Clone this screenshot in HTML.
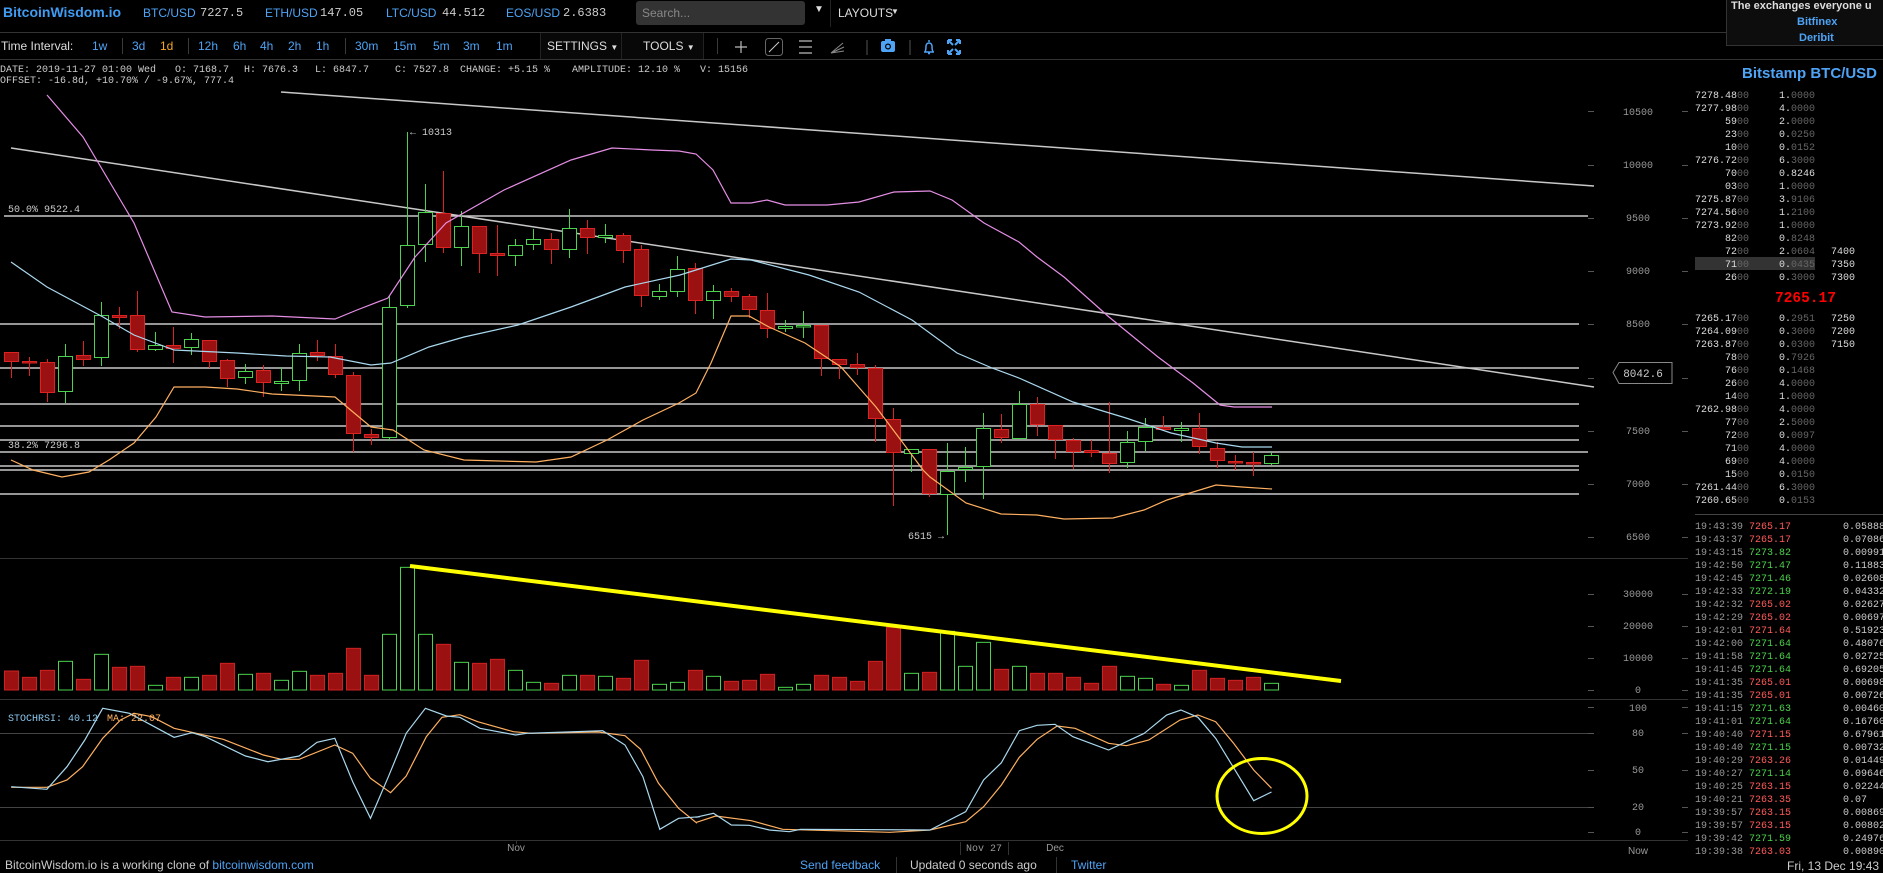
<!DOCTYPE html>
<html><head><meta charset="utf-8">
<style>
*{margin:0;padding:0;box-sizing:border-box}
html,body{width:1883px;height:873px;background:#000;overflow:hidden;font-family:"Liberation Sans",Arial,sans-serif;color:#ddd}
.a{position:absolute;white-space:nowrap}
.m{font-family:"Liberation Mono",monospace}
.b{color:#4ea3f5}
.t12{font-size:12px}
.ob{position:absolute;left:1695px;font-family:"Liberation Mono",monospace;font-size:10px;line-height:13px;color:#ddd}
.ob div{height:13px;white-space:nowrap;position:relative}
.ob .p{display:inline-block;width:54px;text-align:right}
.ob .q{display:inline-block;width:36px;position:absolute;left:84px}
.ob .s{position:absolute;left:136px}
.d{color:#666}
.tr{position:absolute;left:1695px;top:521px;width:188px;overflow:hidden;font-family:"Liberation Mono",monospace;font-size:10px;line-height:13px;color:#999}
.tr div{height:13px;white-space:nowrap;position:relative}
.tr .r{color:#ff5a5a;position:absolute;left:54px}
.tr .g{color:#4cd24c;position:absolute;left:54px}
.tr .v{position:absolute;left:148px;color:#ccc}
.sep{position:absolute;width:1px;background:#3a3a3a}
</style></head><body>

<div class="a" style="left:0;top:32px;width:1726px;height:1px;background:#333"></div>
<div class="a" style="left:0;top:59px;width:1883px;height:1px;background:#333"></div>
<div class="a b" style="left:3px;top:4px;font-size:14px;font-weight:bold;color:#3f9cf2">BitcoinWisdom.io</div>
<div class="a b t12" style="left:143px;top:6px">BTC/USD</div><div class="a m t12" style="left:200px;top:6px;color:#ccc">7227.5</div>
<div class="a b t12" style="left:265px;top:6px">ETH/USD</div><div class="a m t12" style="left:320px;top:6px;color:#ccc">147.05</div>
<div class="a b t12" style="left:386px;top:6px">LTC/USD</div><div class="a m t12" style="left:442px;top:6px;color:#ccc">44.512</div>
<div class="a b t12" style="left:506px;top:6px">EOS/USD</div><div class="a m t12" style="left:563px;top:6px;color:#ccc">2.6383</div>
<div class="a" style="left:636px;top:1px;width:169px;height:24px;background:#333;border-radius:3px"></div>
<div class="a t12" style="left:642px;top:6px;color:#888">Search...</div>
<div class="a" style="left:814px;top:4px;font-size:10px;color:#ddd">▼</div>
<div class="a" style="left:830px;top:0;width:1px;height:27px;background:#222"></div>
<div class="a t12" style="left:838px;top:6px;color:#ddd">LAYOUTS</div>
<div class="a" style="left:891px;top:7px;font-size:8px;color:#ddd">▼</div>
<div class="a" style="left:1726px;top:0;width:157px;height:46px;background:#0d0d0d;border-left:1px solid #333;border-bottom:1px solid #333"></div>
<div class="a" style="left:1731px;top:0;font-size:11px;font-weight:bold;color:#ddd">The exchanges everyone u</div>
<div class="a" style="left:1797px;top:16px;font-size:11px;font-weight:bold;color:#4ea3f5">Bitfinex</div>
<div class="a" style="left:1799px;top:32px;font-size:11px;font-weight:bold;color:#4ea3f5">Deribit</div>

<div class="a t12" style="left:1px;top:39px;color:#ddd">Time Interval:</div>
<div class="a t12 b" style="left:92px;top:39px">1w</div>
<div class="sep" style="left:122px;top:38px;height:16px"></div>
<div class="a t12 b" style="left:132px;top:39px">3d</div>
<div class="a t12" style="left:160px;top:39px;color:#f5a623">1d</div>
<div class="sep" style="left:188px;top:38px;height:16px"></div>
<div class="a t12 b" style="left:198px;top:39px">12h</div>
<div class="a t12 b" style="left:233px;top:39px">6h</div>
<div class="a t12 b" style="left:260px;top:39px">4h</div>
<div class="a t12 b" style="left:288px;top:39px">2h</div>
<div class="a t12 b" style="left:316px;top:39px">1h</div>
<div class="sep" style="left:345px;top:38px;height:16px"></div>
<div class="a t12 b" style="left:355px;top:39px">30m</div>
<div class="a t12 b" style="left:393px;top:39px">15m</div>
<div class="a t12 b" style="left:433px;top:39px">5m</div>
<div class="a t12 b" style="left:463px;top:39px">3m</div>
<div class="a t12 b" style="left:496px;top:39px">1m</div>
<div class="a" style="left:540px;top:33px;width:82px;height:26px;background:#080808;border-left:1px solid #222;border-right:1px solid #222"></div>
<div class="a t12" style="left:547px;top:39px;color:#ddd">SETTINGS <span style="font-size:8px">▼</span></div>
<div class="a" style="left:622px;top:33px;width:82px;height:26px;background:#080808;border-right:1px solid #222"></div>
<div class="a t12" style="left:643px;top:39px;color:#ddd">TOOLS <span style="font-size:8px">▼</span></div>
<div class="sep" style="left:717px;top:38px;height:16px"></div>
<svg class="a" style="left:700px;top:28px" width="300" height="34" viewBox="0 0 300 34">
 <path d="M41 13v12M35 19h12" stroke="#bbb" stroke-width="1.2" fill="none"/>
 <rect x="65.5" y="10.5" width="17" height="17" rx="3" fill="none" stroke="#666"/>
 <path d="M69 24L79 14" stroke="#ccc" stroke-width="1"/>
 <path d="M99 13h13M99 19h13M99 25h13" stroke="#bbb" stroke-width="1.2"/>
 <path d="M131 25l12-10M131 25l13-6M131 25l13-2" stroke="#888" stroke-width="1"/>
 <path d="M167 12v15" stroke="#555"/>
 <rect x="181" y="13" width="14" height="11" rx="2" fill="#4ea3f5"/><rect x="185" y="11" width="6" height="3" fill="#4ea3f5"/><circle cx="188" cy="18.5" r="3" fill="#000"/><circle cx="188" cy="18.5" r="1.8" fill="#4ea3f5"/>
 <path d="M210 12v15" stroke="#555"/>
 <path d="M224 24h10M225 24c1-2 1-4 1-6a3 3 0 0 1 6 0c0 2 0 4 1 6M229 12v2M228 25.5h2" stroke="#4ea3f5" stroke-width="1.5" fill="none"/>
 <path d="M249 13l4 4M259 13l-4 4M249 25l4-4M259 25l-4-4M248 12h4M248 12v4M260 12h-4M260 12v4M248 26h4M248 26v-4M260 26h-4M260 26v-4" stroke="#4ea3f5" stroke-width="2" fill="none"/>
</svg>

<div class="a m" style="left:0;top:65px;font-size:10px;color:#ccc">DATE: 2019-11-27 01:00 Wed</div>
<div class="a m" style="left:175px;top:65px;font-size:10px;color:#ccc">O: 7168.7</div>
<div class="a m" style="left:244px;top:65px;font-size:10px;color:#ccc">H: 7676.3</div>
<div class="a m" style="left:315px;top:65px;font-size:10px;color:#ccc">L: 6847.7</div>
<div class="a m" style="left:395px;top:65px;font-size:10px;color:#ccc">C: 7527.8</div>
<div class="a m" style="left:460px;top:65px;font-size:10px;color:#ccc">CHANGE: +5.15 %</div>
<div class="a m" style="left:572px;top:65px;font-size:10px;color:#ccc">AMPLITUDE: 12.10 %</div>
<div class="a m" style="left:700px;top:65px;font-size:10px;color:#ccc">V: 15156</div>
<div class="a m" style="left:0;top:76px;font-size:10px;color:#ccc">OFFSET: -16.8d, +10.70% / -9.67%, 777.4</div>

<svg id="ch" class="a" style="left:0;top:0" width="1688" height="873" viewBox="0 0 1688 873">
 <g stroke="#333" stroke-width="1">
  <path d="M0 558.5H1688M0 699.5H1688M0 840.5H1688M1688.5 59V855"/>
 </g>
 <path d="M0 733.5H1594M0 807.5H1594" stroke="#444"/>
 <g stroke="#c8c8c8" stroke-width="1.5" fill="none">
  <path d="M4 216H1588M0 324H1579M0 368H1579M0 404H1579M0 426H1579M0 440H1579M0 452H1588M0 466H1579M0 470H1579M0 494H1579"/>
  <path d="M281 92L1594 186"/>
  <path d="M11 148L1594 387"/>
 </g>
 <g id="cand"></g>
 <g fill="none" stroke-width="1.2">
  <polyline stroke="#e58ee5" points="47,95 83,137 134,223 172,312 205,317 272,316 335,319 357,310 388,298 415,257 446,223 504,190 571,160 612,148 652,150 679,151 696,154 713,170 731,203 751,203 767,200 785,205 827,205 859,202 894,192 930,191 952,200 984,223 1019,242 1037,257 1064,277 1109,317 1158,357 1193,383 1220,405 1234,407 1272,407"/>
  <polyline stroke="#aad8ee" points="11,262 47,287 103,317 134,335 174,350 237,353 286,356 330,357 371,365 391,363 429,347 464,337 518,325 571,307 625,287 680,275 731,259 751,260 809,275 859,292 912,320 957,353 992,368 1019,378 1073,402 1126,418 1171,433 1216,443 1242,447 1272,447"/>
  <polyline stroke="#ffb060" points="11,460 33,470 62,477 89,472 109,460 134,443 156,417 174,387 205,387 237,389 272,394 335,397 371,427 393,430 424,450 464,460 536,462 571,457 607,440 643,420 679,403 696,393 711,363 731,316 749,316 769,327 805,343 841,367 876,407 903,443 923,470 930,477 966,503 1001,514 1037,515 1064,519 1113,518 1144,510 1167,500 1216,485 1242,487 1272,489"/>
 </g>
 <g id="vol"></g>
 <path d="M410 566L1341 681" stroke="#ffff00" stroke-width="4"/>
 <g id="st" fill="none" stroke-width="1.2"></g>
 <ellipse cx="1262" cy="796" rx="45" ry="37.5" fill="none" stroke="#ffff00" stroke-width="3"/>
 <g font-family="Liberation Mono,monospace" font-size="10" fill="#ccc">
  <text x="8" y="212">50.0% 9522.4</text>
  <text x="8" y="448">38.2% 7296.8</text>
  <text x="410" y="135">← 10313</text>
  <text x="908" y="539">6515 →</text>
 </g>
 <polygon points="1613,372.5 1619,362.5 1672,362.5 1672,383.5 1619,383.5" fill="#000" stroke="#888"/>
 <text x="1643" y="377" font-family="Liberation Mono,monospace" font-size="11" fill="#ccc" text-anchor="middle">8042.6</text>
 <g font-family="Liberation Mono,monospace" font-size="10" fill="#999" text-anchor="middle">
  <text x="1638" y="115">10500</text><text x="1638" y="168">10000</text><text x="1638" y="221">9500</text><text x="1638" y="274">9000</text><text x="1638" y="327">8500</text><text x="1638" y="434">7500</text><text x="1638" y="487">7000</text><text x="1638" y="540">6500</text>
  <text x="1638" y="597">30000</text><text x="1638" y="629">20000</text><text x="1638" y="661">10000</text><text x="1638" y="693">0</text>
  <text x="1638" y="711">100</text><text x="1638" y="736">80</text><text x="1638" y="773">50</text><text x="1638" y="810">20</text><text x="1638" y="835">0</text>
 </g>
 <g stroke="#555" id="tk"></g>
 <text x="8" y="721" font-family="Liberation Mono,monospace" font-size="10" fill="#8cc8ee">STOCHRSI: 40.12</text>
 <text x="107" y="721" font-family="Liberation Mono,monospace" font-size="10" fill="#ffb060">MA: 22.07</text>
 <g font-family="Liberation Sans,Arial,sans-serif" font-size="10" fill="#999">
  <text x="516" y="851" text-anchor="middle">Nov</text>
  <text x="984" y="851" text-anchor="middle" font-family="Liberation Mono,monospace">Nov 27</text>
  <text x="1055" y="851" text-anchor="middle">Dec</text>
  <text x="1638" y="854" text-anchor="middle">Now</text>
 </g>
 <path d="M960.5 842V855M1008.5 842V855M516.5 840V844" stroke="#333"/>
</svg>

<div class="a" style="left:1742px;top:65px;font-size:15px;font-weight:bold;color:#4ea3f5">Bitstamp BTC/USD</div>
<div class="a" style="left:1695px;top:257px;width:120px;height:13px;background:#333"></div>
<div class="ob" style="top:90px">
<div><span class="p">7278.48<span class="d">00</span></span><span class="q">1.<span class="d">0000</span></span></div>
<div><span class="p">7277.98<span class="d">00</span></span><span class="q">4.<span class="d">0000</span></span></div>
<div><span class="p">59<span class="d">00</span></span><span class="q">2.<span class="d">0000</span></span></div>
<div><span class="p">23<span class="d">00</span></span><span class="q">0.<span class="d">0250</span></span></div>
<div><span class="p">10<span class="d">00</span></span><span class="q">0.<span class="d">0152</span></span></div>
<div><span class="p">7276.72<span class="d">00</span></span><span class="q">6.<span class="d">3000</span></span></div>
<div><span class="p">70<span class="d">00</span></span><span class="q">0.8246</span></div>
<div><span class="p">03<span class="d">00</span></span><span class="q">1.<span class="d">0000</span></span></div>
<div><span class="p">7275.87<span class="d">00</span></span><span class="q">3.<span class="d">9106</span></span></div>
<div><span class="p">7274.56<span class="d">00</span></span><span class="q">1.<span class="d">2100</span></span></div>
<div><span class="p">7273.92<span class="d">00</span></span><span class="q">1.<span class="d">0000</span></span></div>
<div><span class="p">82<span class="d">00</span></span><span class="q">0.<span class="d">8248</span></span></div>
<div><span class="p">72<span class="d">00</span></span><span class="q">2.<span class="d">0604</span></span><span class="s">7400</span></div>
<div><span class="p">71<span class="d">00</span></span><span class="q">0.<span class="d">0435</span></span><span class="s">7350</span></div>
<div><span class="p">26<span class="d">00</span></span><span class="q">0.<span class="d">3000</span></span><span class="s">7300</span></div>
</div>
<div class="a m" style="left:1775px;top:291px;font-size:14.5px;font-weight:bold;color:#ff0000">7265.17</div>
<div class="ob" style="top:313px">
<div><span class="p">7265.17<span class="d">00</span></span><span class="q">0.<span class="d">2951</span></span><span class="s">7250</span></div>
<div><span class="p">7264.09<span class="d">00</span></span><span class="q">0.<span class="d">3000</span></span><span class="s">7200</span></div>
<div><span class="p">7263.87<span class="d">00</span></span><span class="q">0.<span class="d">0300</span></span><span class="s">7150</span></div>
<div><span class="p">78<span class="d">00</span></span><span class="q">0.<span class="d">7926</span></span></div>
<div><span class="p">76<span class="d">00</span></span><span class="q">0.<span class="d">1468</span></span></div>
<div><span class="p">26<span class="d">00</span></span><span class="q">4.<span class="d">0000</span></span></div>
<div><span class="p">14<span class="d">00</span></span><span class="q">1.<span class="d">0000</span></span></div>
<div><span class="p">7262.98<span class="d">00</span></span><span class="q">4.<span class="d">0000</span></span></div>
<div><span class="p">77<span class="d">00</span></span><span class="q">2.<span class="d">5000</span></span></div>
<div><span class="p">72<span class="d">00</span></span><span class="q">0.<span class="d">0097</span></span></div>
<div><span class="p">71<span class="d">00</span></span><span class="q">4.<span class="d">0000</span></span></div>
<div><span class="p">69<span class="d">00</span></span><span class="q">4.<span class="d">0000</span></span></div>
<div><span class="p">15<span class="d">00</span></span><span class="q">0.<span class="d">0150</span></span></div>
<div><span class="p">7261.44<span class="d">00</span></span><span class="q">6.<span class="d">3000</span></span></div>
<div><span class="p">7260.65<span class="d">00</span></span><span class="q">0.<span class="d">0153</span></span></div>
</div>
<div class="a" style="left:1695px;top:514px;width:188px;height:1px;background:#444"></div>
<div class="tr">
<div>19:43:39<span class="r">7265.17</span><span class="v">0.05888</span></div>
<div>19:43:37<span class="r">7265.17</span><span class="v">0.07086</span></div>
<div>19:43:15<span class="g">7273.82</span><span class="v">0.00991</span></div>
<div>19:42:50<span class="g">7271.47</span><span class="v">0.11883</span></div>
<div>19:42:45<span class="g">7271.46</span><span class="v">0.02608</span></div>
<div>19:42:33<span class="g">7272.19</span><span class="v">0.04332</span></div>
<div>19:42:32<span class="r">7265.02</span><span class="v">0.02627</span></div>
<div>19:42:29<span class="r">7265.02</span><span class="v">0.00697</span></div>
<div>19:42:01<span class="r">7271.64</span><span class="v">0.51923</span></div>
<div>19:42:00<span class="g">7271.64</span><span class="v">0.48076</span></div>
<div>19:41:58<span class="g">7271.64</span><span class="v">0.02725</span></div>
<div>19:41:45<span class="g">7271.64</span><span class="v">0.69205</span></div>
<div>19:41:35<span class="r">7265.01</span><span class="v">0.00698</span></div>
<div>19:41:35<span class="r">7265.01</span><span class="v">0.00726</span></div>
<div>19:41:15<span class="g">7271.63</span><span class="v">0.00460</span></div>
<div>19:41:01<span class="g">7271.64</span><span class="v">0.16760</span></div>
<div>19:40:40<span class="r">7271.15</span><span class="v">0.67961</span></div>
<div>19:40:40<span class="g">7271.15</span><span class="v">0.00732</span></div>
<div>19:40:29<span class="r">7263.26</span><span class="v">0.01449</span></div>
<div>19:40:27<span class="g">7271.14</span><span class="v">0.09646</span></div>
<div>19:40:25<span class="r">7263.15</span><span class="v">0.02244</span></div>
<div>19:40:21<span class="r">7263.35</span><span class="v">0.07</span></div>
<div>19:39:57<span class="r">7263.15</span><span class="v">0.00869</span></div>
<div>19:39:57<span class="r">7263.15</span><span class="v">0.00802</span></div>
<div>19:39:42<span class="g">7271.59</span><span class="v">0.24976</span></div>
<div>19:39:38<span class="r">7263.03</span><span class="v">0.00890</span></div>
</div>

<div class="a t12" style="left:5px;top:858px;color:#ccc">BitcoinWisdom.io is a working clone of <span style="color:#4ea3f5">bitcoinwisdom.com</span></div>
<div class="a t12" style="left:800px;top:858px;color:#4ea3f5">Send feedback</div>
<div class="a" style="left:896px;top:857px;width:1px;height:16px;background:#333"></div>
<div class="a t12" style="left:910px;top:858px;color:#ccc">Updated 0 seconds ago</div>
<div class="a" style="left:1056px;top:857px;width:1px;height:16px;background:#333"></div>
<div class="a t12" style="left:1071px;top:858px;color:#4ea3f5">Twitter</div>
<div class="a t12" style="left:1787px;top:859px;color:#ccc">Fri, 13 Dec 19:43</div>

<script>
var NS="http://www.w3.org/2000/svg";
function el(p,n,a){var e=document.createElementNS(NS,n);for(var k in a)e.setAttribute(k,a[k]);p.appendChild(e);return e;}
var C=[["r",352,361,352,378],["r",361,362,357,376],["r",362,392,359,402],["g",356,391,344,403],["r",355,359,341,366],["g",315,357,302,366],["r",315,317,307,329],["r",315,349,291,352],["g",345,349,332,351],["r",345,348,327,363],["g",339,347,333,355],["r",340,361,340,368],["r",360,378,359,387],["g",371,377,364,384],["r",370,382,365,397],["g",381,383,367,391],["g",353,380,344,391],["r",352,355,340,361],["r",356,374,344,378],["r",375,433,372,452],["r",434,437,429,445],["g",307,437,296,441],["g",245,305,132,308],["g",212,244,184,262],["r",213,247,171,253],["g",226,247,211,266],["r",226,253,226,273],["r",253,255,225,276],["g",245,255,239,266],["g",239,244,229,250],["r",239,249,233,264],["g",228,249,209,258],["r",228,237,220,254],["g",235,237,224,243],["r",235,250,233,263],["r",249,295,245,307],["g",291,296,284,300],["g",269,291,256,297],["r",268,300,263,314],["g",291,300,285,319],["r",291,296,288,302],["r",296,309,294,318],["r",310,328,293,338],["g",326,328,320,332],["g",325,326,311,338],["r",325,358,325,376],["r",359,364,359,379],["r",364,367,353,375],["r",368,418,365,442],["r",419,452,408,506],["g",449,453,449,472],["r",449,493,449,497],["g",471,494,443,535],["g",467,469,447,482],["g",428,466,413,499],["r",429,437,414,443],["g",404,438,391,439],["r",404,424,397,436],["r",425,439,425,459],["r",440,451,438,469],["r",450,452,440,457],["r",453,463,402,473],["g",442,462,431,468],["g",427,441,418,451],["r",427,429,416,429],["g",428,430,422,442],["r",428,446,413,454],["r",448,460,442,468],["r",461,462,455,470],["r",462,463,452,476],["g",455,463,452,465]];
var V=[633,652,631,604,658,583,622,619,676,652,652,646,610,643,640,661,634,646,640,565,646,523,322,523,553,607,610,598,631,667,670,646,646,649,655,601,673,667,631,649,664,661,643,682,673,646,652,664,604,502,640,637,514,619,547,628,619,640,640,652,670,619,649,655,673,676,631,655,661,652,670];
var cg=document.getElementById("cand"),vg=document.getElementById("vol");
for(var i=0;i<C.length;i++){var c=C[i],x=11+18*i,red=c[0]=="r",col=red?"#dd2222":"#4cd24c";
 el(cg,"line",{x1:x+.5,x2:x+.5,y1:c[3],y2:c[4],stroke:col,"stroke-width":1});
 var h=Math.max(c[2]-c[1],1.5);
 el(cg,"rect",{x:x-6.5,y:c[1]+.5,width:14,height:h,fill:red?"#9b1111":"#000",stroke:col,"stroke-width":1});
 var t=460+V[i]/3;
 el(vg,"rect",{x:x-6.5,y:t,width:14,height:690-t,fill:red?"#9b1111":"#000",stroke:red?"#cc2222":"#4cd24c","stroke-width":1});
}
function pts(a,ox){var s=[];for(var j=0;j<a.length;j+=2)s.push((ox+a[j]/2.24).toFixed(1)+","+(700+a[j+1]/3).toFixed(1));return s.join(" ");}
var b8=[25,260,105,268,150,200,190,120,230,25,290,40,390,112,430,98,460,110,550,168,600,185,670,168,710,127,750,115,790,245,830,355,870,230,910,100,953,25,1000,48,1030,52,1075,85,1155,105,1180,100,1270,96,1350,92,1400,135,1440,230,1478,388,1520,355,1568,350];
var b9=[35,352,75,340,115,375,155,376,200,390,245,395,270,388,560,390,640,335,680,240,720,188,760,92,800,76,840,73,880,110,960,150,1040,100,1090,45,1122,30,1160,52,1200,115,1285,302,1325,276];
var o8=[25,262,105,262,150,240,185,200,230,115,270,60,300,40,340,50,390,85,500,118,590,165,630,178,670,178,750,135,790,160,830,235,875,278,910,228,955,110,990,52,1030,44,1070,65,1150,95,1190,100,1340,96,1400,107,1435,148,1475,250,1520,325,1560,368];
var o9=[37,367,80,348,160,362,230,388,470,397,560,390,640,365,680,320,720,255,760,172,800,118,845,78,885,85,960,130,1000,137,1050,120,1120,60,1160,45,1200,65,1240,130,1285,210,1325,265];
var sg=document.getElementById("st");
el(sg,"polyline",{points:pts(o8,0)+" "+pts(o9,680),stroke:"#ffb060"});
el(sg,"polyline",{points:pts(b8,0)+" "+pts(b9,680),stroke:"#aad8ee"});
var tk=document.getElementById("tk"),ys=[111,165,218,271,324,378,431,484,537,594,626,658,690,707,733,770,807,832];
ys.forEach(function(y){el(tk,"path",{d:"M1588 "+(y+.5)+"h6M1682 "+(y+.5)+"h6"});});
</script>
</body></html>
